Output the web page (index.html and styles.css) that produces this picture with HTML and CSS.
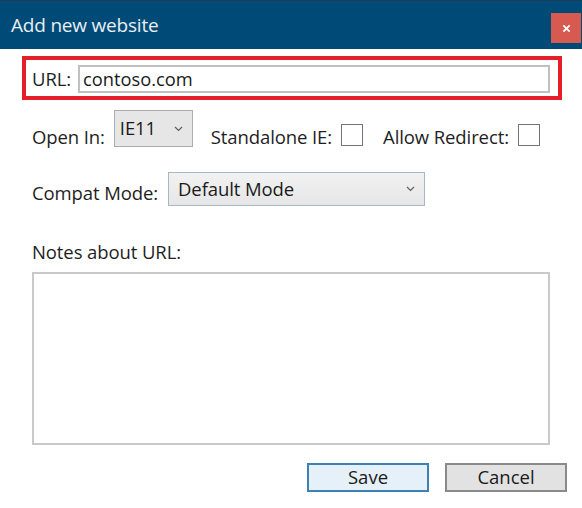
FILE: index.html
```html
<!DOCTYPE html>
<html>
<head>
<meta charset="utf-8">
<link rel="stylesheet" href="styles.css">
</head>
<body>
<div class="dialog">
  <header class="titlebar">
    <span class="title">Add new website</span>
    <button class="close" aria-label="Close">
      <svg width="10" height="10" viewBox="0 0 10 10"><path d="M1.5 1.5 L8.5 8.5 M8.5 1.5 L1.5 8.5" stroke="#fff" stroke-width="2" fill="none"/></svg>
    </button>
  </header>
  <main class="content">
    <div class="highlight">
      <span class="label">URL:</span>
      <div class="textbox">contoso.com</div>
    </div>
    <div class="row row-open">
      <span class="label">Open In:</span>
      <div class="combo combo-small">
        <span>IE11</span>
        <svg class="chev" width="9" height="6" viewBox="0 0 9 6"><polyline points="1,1 4.5,4.5 8,1" fill="none" stroke="#606060" stroke-width="1.2"/></svg>
      </div>
      <span class="label label-sa">Standalone IE:</span>
      <span class="check"></span>
      <span class="label label-ar">Allow Redirect:</span>
      <span class="check"></span>
    </div>
    <div class="row row-compat">
      <span class="label">Compat Mode:</span>
      <div class="combo combo-wide">
        <span>Default Mode</span>
        <svg class="chev" width="9" height="6" viewBox="0 0 9 6"><polyline points="1,1 4.5,4.5 8,1" fill="none" stroke="#606060" stroke-width="1.2"/></svg>
      </div>
    </div>
    <div class="notes-label label">Notes about URL:</div>
    <div class="notes"></div>
    <div class="buttons">
      <button class="btn btn-save">Save</button>
      <button class="btn btn-cancel">Cancel</button>
    </div>
  </main>
</div>
</body>
</html>
```
FILE: styles.css
```css
* { box-sizing: border-box; }
html, body { margin: 0; padding: 0; background: #fff; }
body {
  width: 582px;
  height: 508px;
  overflow: hidden;
  font-family: "Open Sans", "Noto Sans", sans-serif;
  color: #1e1e1e;
}
.dialog { width: 582px; height: 508px; background: #fff; }
.titlebar {
  height: 49px;
  background: #004a77;
  border-top: 1px solid #1d3c55;
  display: flex;
  align-items: center;
  justify-content: space-between;
  padding-left: 11px;
  padding-right: 1px;
}
.title {
  color: #e9eff4;
  font-size: 19px;
  letter-spacing: -0.2px;
  margin-top: -1px;
}
.close {
  width: 30px;
  height: 30px;
  margin-top: 6px;
  background: #d65a50;
  border: none;
  padding: 0;
  display: flex;
  align-items: center;
  justify-content: center;
}
.close svg { width: 9px; height: 9px; }
.content { display: flex; flex-direction: column; }
.label { font-size: 18.5px; color: #1e1e1e; white-space: nowrap; letter-spacing: -0.1px; }
.highlight {
  margin: 7px 0 0 22px;
  width: 540px;
  height: 44px;
  border: 4px solid #e51f2a;
  display: flex;
  align-items: center;
  padding: 2px 8px 0 6px;
}
.highlight .label { margin-right: 7px; margin-top: -2px; }
.textbox {
  flex: 1;
  height: 28px;
  border: 2px solid #c0c0c0;
  padding-left: 3px;
  font-size: 18.3px;
  line-height: 23px;
  color: #1a1a1a;
}
.row { display: flex; padding-left: 32px; }
.row-open { margin-top: 10px; height: 37px; align-items: flex-end; }
.row-open .label { line-height: 22px; margin-bottom: -1px; }
.combo {
  display: flex;
  align-items: center;
  justify-content: space-between;
  font-size: 18.5px;
  letter-spacing: -0.1px;
  color: #1a1a1a;
}
.combo-small {
  width: 79px;
  height: 37px;
  margin-left: 9px;
  background: #e6e6e6;
  border: 1px solid #adadad;
  padding: 0 9px 0 5px;
  align-self: stretch;
}
.combo-small span { margin-top: -2px; }
.label-sa { margin-left: 18px; }
.label-ar { margin-left: 20px; }
.check {
  width: 22px;
  height: 22px;
  border: 1px solid #747474;
  background: #fff;
  margin-left: 9px;
  margin-bottom: 1px;
}
.row-compat { margin-top: 25px; align-items: center; }
.row-compat .label { margin-right: 10px; margin-top: 6px; }
.combo-wide {
  width: 257px;
  height: 34px;
  background: linear-gradient(#f2f2f2, #e6e6e6);
  border: 1px solid #a9b6c4;
  padding: 0 9px 0 9px;
}
.combo-wide span { margin-top: -2px; }
.notes-label { padding-left: 32px; margin-top: 34px; line-height: 24px; }
.notes {
  margin: 8px 0 0 32px;
  width: 518px;
  height: 173px;
  border: 2px solid #c9c9c9;
  background: #fff;
}
.buttons {
  display: flex;
  justify-content: flex-end;
  gap: 16px;
  padding-right: 15px;
  margin-top: 18px;
}
.btn {
  width: 122px;
  height: 29px;
  font-family: "Open Sans", "Noto Sans", sans-serif;
  font-size: 18.5px;
  color: #1a1a1a;
  padding: 0 0 1px 0;
  line-height: 24px;
}
.btn-save { background: #e5f0f9; border: 2px solid #3d80b5; }
.btn-cancel { background: #e2e2e2; border: 2px solid #8a8a8a; }
```
